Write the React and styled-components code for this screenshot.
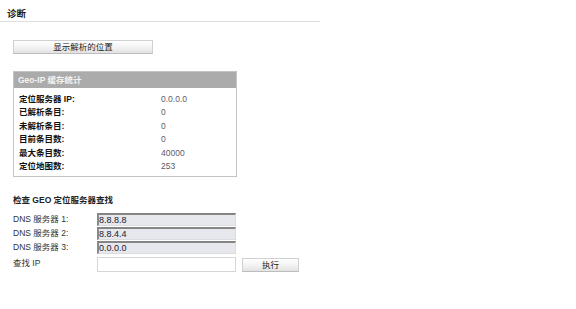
import React from "react";
import styled, { createGlobalStyle } from "styled-components";

const Global = createGlobalStyle`
  html, body { margin: 0; padding: 0; background: #fff; }
  body {
    font-family: "Liberation Sans", Arial, "Noto Sans CJK SC", sans-serif;
    font-size: 8.5px;
    color: #222;
  }
`;

const Page = styled.div`
  width: 576px;
  height: 309px;
  padding-top: 9px;
  box-sizing: border-box;
`;

const TitleBar = styled.div`
  width: 320px;
  padding: 0 0 2px 7px;
  box-sizing: border-box;
  border-bottom: 1px solid #dedede;
  font-weight: bold;
  font-size: 9.5px;
  line-height: 10px;
  color: #1a1a1a;
`;

const Content = styled.div`
  padding-left: 13px;
  display: flex;
  flex-direction: column;
  align-items: flex-start;
`;

const GradButton = styled.button`
  width: ${(p) => p.$w}px;
  height: 14px;
  padding: 0;
  margin: 0;
  border: 1px solid #d0d0d0;
  border-bottom-color: #bdbdbd;
  background: linear-gradient(#ffffff, #f2f2f2 55%, #e2e2e2);
  font-family: inherit;
  font-size: 8.5px;
  line-height: 12px;
  color: #222;
`;

const ShowButton = styled(GradButton)`
  margin-top: 18px;
`;

const StatsBox = styled.div`
  margin-top: 17px;
  width: 224px;
  box-sizing: border-box;
  border: 1px solid #c4c4c4;
`;

const BoxHeader = styled.div`
  height: 16px;
  background: #ababab;
  color: #f4f4f4;
  font-weight: bold;
  line-height: 16px;
  padding-left: 4px;
`;

const BoxBody = styled.div`
  display: grid;
  grid-template-columns: 142px 1fr;
  padding: 5px 0 3px 5px;
  line-height: 13.4px;
`;

const StatLabel = styled.div`
  font-weight: bold;
  color: #111;
`;

const StatValue = styled.div`
  color: #5c5c6a;
`;

const Heading = styled.div`
  margin-top: 18px;
  font-weight: bold;
  color: #222;
  line-height: 10px;
`;

const Form = styled.div`
  margin-top: 8px;
  display: grid;
  grid-template-columns: 84px 145px auto;
  row-gap: 1px;
  align-items: center;
`;

const FormLabel = styled.div`
  color: #333;
  line-height: 13px;
`;

const FieldBox = styled.div`
  width: 139px;
  height: 13px;
  box-sizing: border-box;
  border: 1px solid #dcdcdc;
  border-top: 2px solid #858585;
  border-left: 2px solid #8a8a8a;
  background: #e7e7ee;
  color: #1a1a2a;
  font-size: 9px;
  line-height: 10px;
`;

const BlankField = styled.div`
  width: 139px;
  height: 15px;
  box-sizing: border-box;
  border: 1px solid #d6d6d6;
  background: #fff;
  margin-top: 2px;
`;

const ExecButton = styled(GradButton)`
  margin-top: 2px;
`;

const stats = [
  ["定位服务器 IP:", "0.0.0.0"],
  ["已解析条目:", "0"],
  ["未解析条目:", "0"],
  ["目前条目数:", "0"],
  ["最大条目数:", "40000"],
  ["定位地图数:", "253"],
];

const dns = [
  ["DNS 服务器 1:", "8.8.8.8"],
  ["DNS 服务器 2:", "8.8.4.4"],
  ["DNS 服务器 3:", "0.0.0.0"],
];

export default function App() {
  return (
    <>
      <Global />
      <Page>
        <TitleBar>诊断</TitleBar>
        <Content>
          <ShowButton $w={140}>显示解析的位置</ShowButton>
          <StatsBox>
            <BoxHeader>Geo-IP 缓存统计</BoxHeader>
            <BoxBody>
              {stats.map(([l, v]) => (
                <React.Fragment key={l}>
                  <StatLabel>{l}</StatLabel>
                  <StatValue>{v}</StatValue>
                </React.Fragment>
              ))}
            </BoxBody>
          </StatsBox>
          <Heading>检查 GEO 定位服务器查找</Heading>
          <Form>
            {dns.map(([l, v]) => (
              <React.Fragment key={l}>
                <FormLabel>{l}</FormLabel>
                <FieldBox>{v}</FieldBox>
                <span />
              </React.Fragment>
            ))}
            <FormLabel>查找 IP</FormLabel>
            <BlankField />
            <ExecButton $w={57}>执行</ExecButton>
          </Form>
        </Content>
      </Page>
    </>
  );
}
